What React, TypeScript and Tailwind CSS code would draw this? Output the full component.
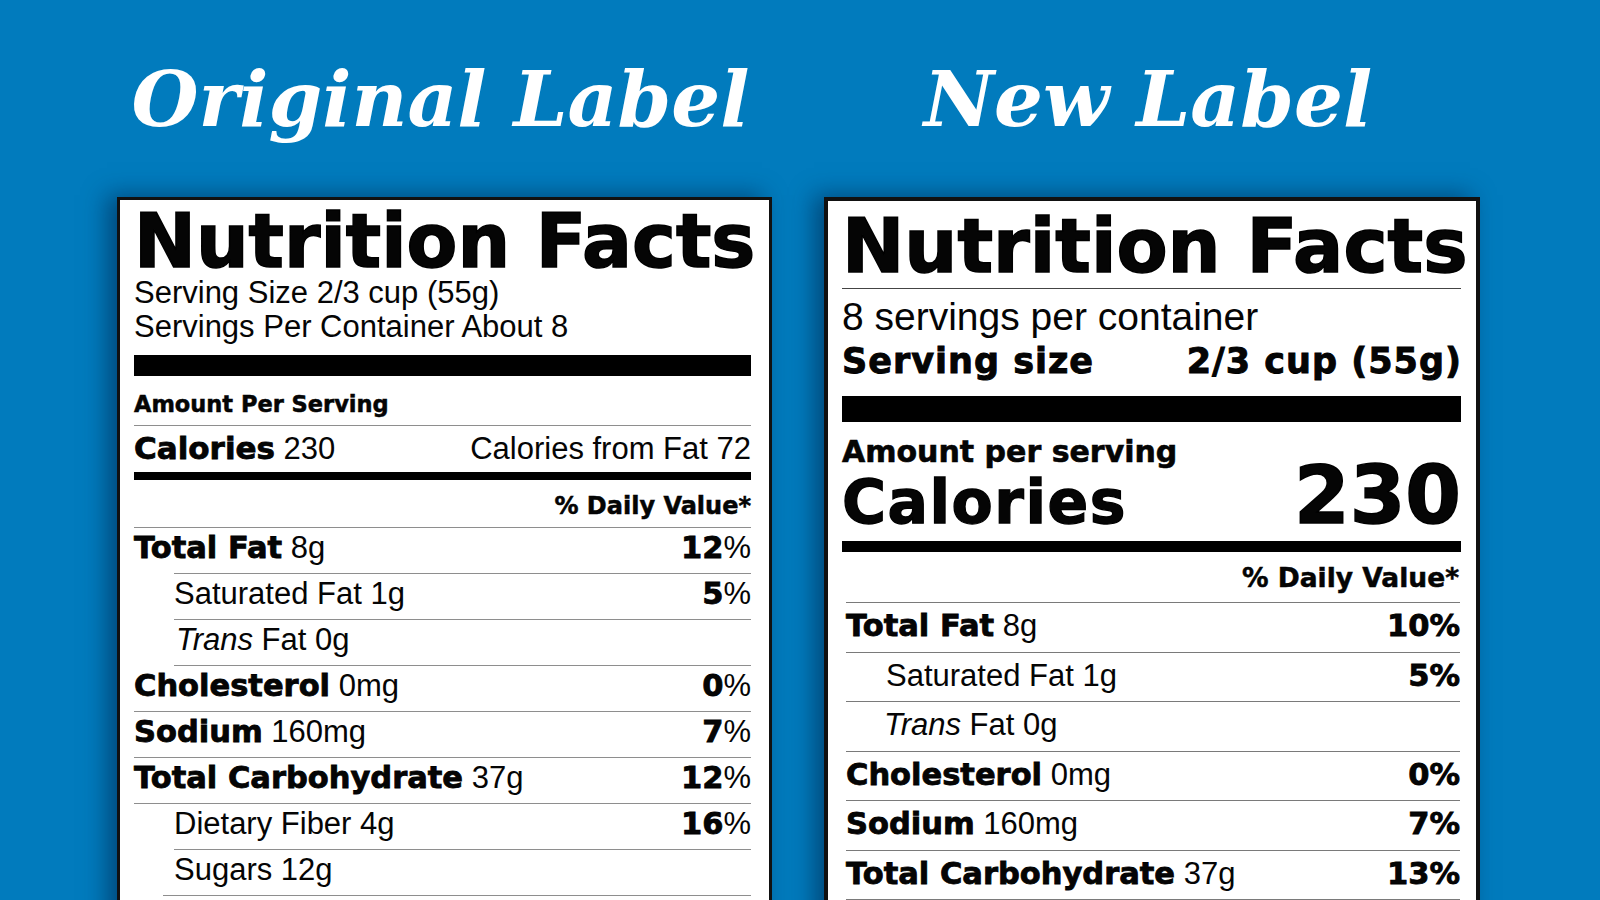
import React from "react";

type Row = {
  line: number;
  indent: number;
  name?: string;
  value?: string;
  italic?: string;
  rest?: string;
  pctNum?: string;
};

const leftRows: Row[] = [
  { line: 0, indent: 0, name: "Total Fat", value: "8g", pctNum: "12" },
  { line: 40, indent: 40, rest: "Saturated Fat 1g", pctNum: "5" },
  { line: 40, indent: 42, italic: "Trans", rest: " Fat 0g" },
  { line: 40, indent: 0, name: "Cholesterol", value: "0mg", pctNum: "0" },
  { line: 0, indent: 0, name: "Sodium", value: "160mg", pctNum: "7" },
  { line: 0, indent: 0, name: "Total Carbohydrate", value: "37g", pctNum: "12" },
  { line: 0, indent: 40, rest: "Dietary Fiber 4g", pctNum: "16" },
  { line: 40, indent: 40, rest: "Sugars 12g" },
  { line: 29, indent: 0, name: "Protein", value: "3g" },
];

const rightRows: Row[] = [
  { line: 0, indent: 0, name: "Total Fat", value: "8g", pctNum: "10" },
  { line: 0, indent: 40, rest: "Saturated Fat 1g", pctNum: "5" },
  { line: 0, indent: 38, italic: "Trans", rest: " Fat 0g" },
  { line: 0, indent: 0, name: "Cholesterol", value: "0mg", pctNum: "0" },
  { line: 0, indent: 0, name: "Sodium", value: "160mg", pctNum: "7" },
  { line: 0, indent: 0, name: "Total Carbohydrate", value: "37g", pctNum: "13" },
  { line: 0, indent: 40, rest: "Dietary Fiber 4g", pctNum: "14" },
];

const heavy = "font-['DejaVu_Sans',sans-serif] font-bold";

function RowLabel({ r }: { r: Row }) {
  return (
    <div className="whitespace-nowrap">
      {r.name && (
        <span className="font-['DejaVu_Sans',sans-serif] font-bold text-[30.5px] [-webkit-text-stroke:0.8px_#000]">
          {r.name}
        </span>
      )}
      {r.value && <span className="text-[31px]"> {r.value}</span>}
      {r.italic && <span className="italic text-[31px]">{r.italic}</span>}
      {r.rest && <span className="text-[31px]">{r.rest}</span>}
    </div>
  );
}

function LeftRow({ r }: { r: Row }) {
  return (
    <div className="h-[46px] flex flex-col shrink-0">
      <div className="h-px bg-[#8e8e8e] shrink-0" style={{ marginLeft: r.line }} />
      <div
        className="flex items-baseline justify-between pt-[2px] leading-[36px] text-[31px]"
        style={{ paddingLeft: r.indent }}
      >
        <RowLabel r={r} />
        {r.pctNum && (
          <div className="whitespace-nowrap">
            <span className="font-['DejaVu_Sans',sans-serif] font-bold text-[30.5px] [-webkit-text-stroke:0.8px_#000]">
              {r.pctNum}
            </span>
            <span className="text-[31px]">%</span>
          </div>
        )}
      </div>
    </div>
  );
}

function RightRow({ r }: { r: Row }) {
  return (
    <div className="h-[49.5px] flex flex-col shrink-0">
      <div className="h-px bg-[#7a7a7a] shrink-0" style={{ marginLeft: r.line }} />
      <div
        className="flex items-baseline justify-between pt-[5px] leading-[36px] text-[31px]"
        style={{ paddingLeft: r.indent }}
      >
        <RowLabel r={r} />
        {r.pctNum && (
          <div className="whitespace-nowrap font-['DejaVu_Sans',sans-serif] font-bold text-[30.5px] [-webkit-text-stroke:0.8px_#000]">
            {r.pctNum}%
          </div>
        )}
      </div>
    </div>
  );
}

function OriginalLabel() {
  return (
    <div className="mt-[60px] border-[3px] border-[#111] bg-white pl-[14px] pr-[18px] shadow-[-10px_-2px_22px_rgba(0,25,60,0.5)] flex flex-col">
      <div className={`${heavy} mt-[4px] h-[74px] leading-[74px] text-[74px] whitespace-nowrap [-webkit-text-stroke:1.5px_#000]`}>
        Nutrition Facts
      </div>
      <div className="text-[31px] leading-[30px] whitespace-nowrap">Serving Size 2/3 cup (55g)</div>
      <div className="mt-[2px] text-[31px] leading-[34px] whitespace-nowrap">Servings Per Container About 8</div>
      <div className="mt-[11px] h-[21px] bg-black shrink-0" />
      <div className={`${heavy} mt-[14px] text-[22.5px] leading-[28px] whitespace-nowrap [-webkit-text-stroke:0.5px_#000]`}>
        Amount Per Serving
      </div>
      <div className="mt-[7px] h-px bg-[#8e8e8e] shrink-0" />
      <div className="mt-[4px] flex items-baseline justify-between leading-[36px] text-[31px]">
        <div className="whitespace-nowrap">
          <span className="font-['DejaVu_Sans',sans-serif] font-bold text-[31px] [-webkit-text-stroke:0.8px_#000]">
            Calories
          </span>
          <span> 230</span>
        </div>
        <div className="whitespace-nowrap">Calories from Fat 72</div>
      </div>
      <div className="mt-[5px] h-[8px] bg-black shrink-0" />
      <div className={`${heavy} mt-[11px] text-right text-[24px] leading-[30px] whitespace-nowrap [-webkit-text-stroke:0.5px_#000]`}>
        % Daily Value*
      </div>
      <div className="mt-[6px] flex flex-col">
        {leftRows.map((r, i) => (
          <LeftRow key={i} r={r} />
        ))}
      </div>
    </div>
  );
}

function NewLabel() {
  return (
    <div className="mt-[60px] border-[4px] border-[#111] bg-white pl-[14px] pr-[15px] shadow-[-10px_-2px_22px_rgba(0,25,60,0.5)] flex flex-col">
      <div className={`${heavy} mt-[9px] h-[74px] leading-[74px] text-[74.5px] whitespace-nowrap [-webkit-text-stroke:1.5px_#000]`}>
        Nutrition Facts
      </div>
      <div className="mt-[4px] h-px bg-[#444] shrink-0" />
      <div className="mt-[10px] text-[39px] leading-[36px] whitespace-nowrap">8 servings per container</div>
      <div className={`${heavy} mt-[8px] flex justify-between text-[35px] leading-[36px] tracking-[1px] whitespace-nowrap [-webkit-text-stroke:0.9px_#000]`}>
        <span>Serving size</span>
        <span className="-mr-[1px]">2/3 cup (55g)</span>
      </div>
      <div className="mt-[17px] h-[26px] bg-black shrink-0" />
      <div className={`${heavy} mt-[17px] text-[30px] leading-[26px] whitespace-nowrap [-webkit-text-stroke:0.6px_#000]`}>
        Amount per serving
      </div>
      <div className={`${heavy} mt-[4px] flex items-baseline justify-between`}>
        <span className="text-[60px] leading-[54px] tracking-[1.5px] whitespace-nowrap [-webkit-text-stroke:1.3px_#000]">
          Calories
        </span>
        <span className="text-[80px] leading-[54px] whitespace-nowrap [-webkit-text-stroke:1.5px_#000]">230</span>
      </div>
      <div className="mt-[12px] h-[11px] bg-black shrink-0" />
      <div className={`${heavy} mt-[11px] mr-[2px] text-right text-[26.5px] leading-[30px] whitespace-nowrap [-webkit-text-stroke:0.5px_#000]`}>
        % Daily Value*
      </div>
      <div className="mt-[9px] ml-[4px] mr-[1px] flex flex-col">
        {rightRows.map((r, i) => (
          <RightRow key={i} r={r} />
        ))}
      </div>
    </div>
  );
}

function Title({ children }: { children: React.ReactNode }) {
  return (
    <div className="h-[76px] leading-[76px] text-center pr-[8px] font-['DejaVu_Serif',serif] italic font-bold text-[77px] text-white whitespace-nowrap">
      {children}
    </div>
  );
}

export default function App() {
  return (
    <div className="w-[1600px] h-[900px] overflow-hidden bg-[#017bbd] flex items-start gap-[52px] pl-[117px] pt-[61px] font-['Liberation_Sans',Arial,sans-serif] text-[#050505]">
      <div className="w-[655px] shrink-0 flex flex-col">
        <Title>Original Label</Title>
        <OriginalLabel />
      </div>
      <div className="w-[656px] shrink-0 flex flex-col">
        <Title>New Label</Title>
        <NewLabel />
      </div>
    </div>
  );
}
